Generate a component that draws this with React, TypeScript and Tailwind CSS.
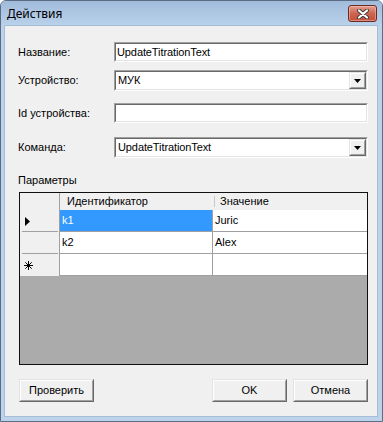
const FONT = "font-['Liberation_Sans',Arial,sans-serif]";

function Sunken({ className, children }: { className?: string; children?: React.ReactNode }) {
  return (
    <div className={`border border-t-[#a0a0a0] border-l-[#a0a0a0] border-b-white border-r-white ${className ?? ""}`}>
      <div className="flex h-full w-full items-center border border-t-[#696969] border-l-[#696969] border-b-[#e3e3e3] border-r-[#e3e3e3] bg-white">
        {children}
      </div>
    </div>
  );
}

function Raised({ className, children }: { className?: string; children?: React.ReactNode }) {
  return (
    <div className={`border border-t-[#e3e3e3] border-l-[#e3e3e3] border-b-[#696969] border-r-[#696969] ${className ?? ""}`}>
      <div className="flex h-full w-full items-center justify-center border border-t-white border-l-white border-b-[#a0a0a0] border-r-[#a0a0a0] bg-[#f0f0f0]">
        {children}
      </div>
    </div>
  );
}

function Row({ label, children, className }: { label: string; children: React.ReactNode; className: string }) {
  return (
    <div className={`flex items-center pl-[13px] ${className}`}>
      <span className="w-[96px]">{label}</span>
      {children}
    </div>
  );
}

function TextBox({ value, h }: { value?: string; h: string }) {
  return (
    <Sunken className={`w-[254px] ${h}`}>
      <span className="pl-[1px] tracking-[-0.1px]">{value}</span>
    </Sunken>
  );
}

function Combo({ value }: { value: string }) {
  return (
    <Sunken className="h-[21px] w-[254px]">
      <span className="flex-1 pl-[2px] tracking-[-0.1px]">{value}</span>
      <Raised className="h-full w-[17px]">
        <svg width="7" height="4" viewBox="0 0 7 4">
          <path d="M0 0h7L3.5 4z" fill="#000" />
        </svg>
      </Raised>
    </Sunken>
  );
}

function CloseButton() {
  return (
    <div className="flex h-[17px] w-[29px] items-center justify-center rounded-[3px] border border-[#6b2a24] bg-gradient-to-b from-[#e3a090] via-[#cd6450] to-[#c5503a] shadow-[inset_0_0_0_1px_rgba(255,210,200,0.45)]">
      <svg width="14" height="10" viewBox="0 0 14 10">
        <path d="M3 1.5l8 7M11 1.5l-8 7" stroke="#3a3a3a" strokeWidth="4" strokeLinecap="round" />
        <path d="M3 1.5l8 7M11 1.5l-8 7" stroke="#fff" strokeWidth="2.2" strokeLinecap="round" />
      </svg>
    </div>
  );
}

function RowHead({ children, last }: { children?: React.ReactNode; last?: boolean }) {
  return (
    <div className="relative flex h-full w-[40px] shrink-0 items-center border-r border-[#a0a0a0] bg-[#f0f0f0] pl-[5px]">
      {children}
      {!last && (
        <div className="absolute bottom-0 left-[2px] right-[1px] border-b border-[#a0a0a0] shadow-[0_1px_0_#fff]" />
      )}
    </div>
  );
}

export default function App() {
  return (
    <div className={`h-[422px] w-[383px] bg-white text-[11px] text-black ${FONT}`}>
      <div className="flex h-full w-full flex-col rounded-t-[6px] border border-[#5a6d84] bg-[#bcd3eb]">
        {/* title bar */}
        <div className="flex h-[24px] shrink-0 items-start justify-between rounded-t-[5px] bg-gradient-to-b from-[#a1bbdb] to-[#b9d1ea] pl-[6px] pr-[5px]">
          <span className="mt-[5px] font-['Noto_Sans',sans-serif] text-[12px] leading-[15px]">Действия</span>
          <div className="mt-[4px]">
            <CloseButton />
          </div>
        </div>

        {/* client area */}
        <div className="mb-[4px] ml-[3px] mr-[4px] flex flex-1 flex-col border border-[#a6bdd8] bg-[#f0f0f0]">
          <Row label="Название:" className="mt-[16px] h-[20px]">
            <TextBox value="UpdateTitrationText" h="h-[20px]" />
          </Row>
          <Row label="Устройство:" className="mt-[8px] h-[21px]">
            <Combo value="МУК" />
          </Row>
          <Row label="Id устройства:" className="mt-[12px] h-[20px]">
            <TextBox h="h-[20px]" />
          </Row>
          <Row label="Команда:" className="mt-[14px] h-[21px]">
            <Combo value="UpdateTitrationText" />
          </Row>

          <div className="ml-[13px] mt-[16px] h-[13px] leading-[13px]">Параметры</div>

          {/* grid */}
          <div className="ml-[14px] mt-[5px] flex h-[173px] w-[349px] flex-col border border-[#101010] bg-[#ababab]">
            <div className="flex h-[17px] shrink-0 bg-[#f0f0f0]">
              <div className="w-[40px] shrink-0 border-r border-[#a0a0a0]" />
              <div className="flex w-[154px] shrink-0 items-center pl-[7px]">Идентификатор</div>
              <div className="my-[3px] border-l border-[#c8c8c8]" />
              <div className="flex flex-1 items-center pl-[5px]">Значение</div>
            </div>
            <div className="flex h-[22px] shrink-0">
              <RowHead>
                <svg width="5" height="9" viewBox="0 0 5 9">
                  <path d="M0 0l5 4.5L0 9z" fill="#000" />
                </svg>
              </RowHead>
              <div className="flex w-[153px] shrink-0 items-center border-b border-r border-[#a0a0a0] bg-[#3399ff] pl-[2px] text-white">k1</div>
              <div className="flex flex-1 items-center border-b border-[#a0a0a0] bg-white pl-[2px]">Juric</div>
            </div>
            <div className="flex h-[22px] shrink-0">
              <RowHead />
              <div className="flex w-[153px] shrink-0 items-center border-b border-r border-[#a0a0a0] bg-white pl-[2px]">k2</div>
              <div className="flex flex-1 items-center border-b border-[#a0a0a0] bg-white pl-[2px]">Alex</div>
            </div>
            <div className="flex h-[22px] shrink-0">
              <RowHead last>
                <svg width="9" height="9" viewBox="0 0 9 9" className="ml-[-1px]">
                  <path d="M4.5 0v9M0 4.5h9M1.3 1.3l6.4 6.4M7.7 1.3l-6.4 6.4" stroke="#000" strokeWidth="1" />
                </svg>
              </RowHead>
              <div className="w-[153px] shrink-0 border-b border-r border-[#a0a0a0] bg-white" />
              <div className="flex-1 border-b border-[#a0a0a0] bg-white" />
            </div>
          </div>

          {/* buttons */}
          <div className="ml-[14px] mt-[14px] flex h-[23px] w-[349px]">
            <Raised className="h-[23px] w-[75px]">Проверить</Raised>
            <div className="flex-1" />
            <Raised className="h-[23px] w-[75px]">OK</Raised>
            <Raised className="ml-[6px] h-[23px] w-[75px]">Отмена</Raised>
          </div>
        </div>
      </div>
    </div>
  );
}
